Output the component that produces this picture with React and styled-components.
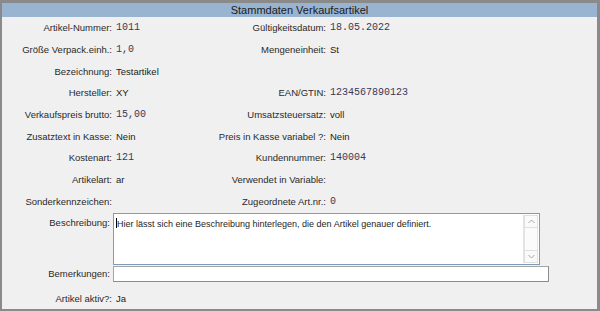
import React from 'react'
import styled, { createGlobalStyle } from 'styled-components'

const GlobalStyle = createGlobalStyle`
  html, body { margin: 0; padding: 0; background: #f0f0f0; }
  body { font-family: "Liberation Sans", Arial, sans-serif; }
`;

const Frame = styled.div`
  width: 600px;
  height: 311px;
  box-sizing: border-box;
  border-style: solid;
  border-color: #8a8a8a;
  border-width: 3px 3px 2px 2px;
  background: #f0f0f0;
  display: flex;
  flex-direction: column;
`;

const Header = styled.div`
  height: 14px;
  background: #99b4d1;
  color: #1a1a1a;
  font-size: 11px;
  line-height: 14px;
  text-align: center;
`;

const FieldGrid = styled.div`
  display: grid;
  grid-template-columns: 110px 90px 116px 1fr;
  grid-auto-rows: 21.7px;
  column-gap: 4px;
  align-items: center;
  font-size: 9.5px;
  color: #2a2a2a;
`;

const Label = styled.div`
  text-align: right;
  white-space: nowrap;
`;

const Value = styled.div`
  white-space: nowrap;
  color: #222;
  ${p => p.$mono && `
    font-family: "Liberation Mono", "Courier New", monospace;
    font-size: 10px;
    color: #3d3754;
  `}
`;

const MemoSection = styled.div`
  display: grid;
  grid-template-columns: 108px 1fr;
  column-gap: 3px;
  margin-top: 1px;
  font-size: 9.5px;
  color: #2a2a2a;
`;

const MemoLabel = styled.div`
  text-align: right;
  white-space: nowrap;
  padding-top: ${p => p.$top || 0}px;
  align-self: ${p => (p.$center ? 'center' : 'start')};
`;

const MemoBox = styled.div`
  width: 427px;
  height: 52px;
  box-sizing: border-box;
  border: 1px solid #7f9db9;
  background: #fff;
  display: flex;
`;

const MemoText = styled.div`
  flex: 1;
  padding: 4px 2px;
  font-size: 9px;
  color: #1e1e1e;
  white-space: nowrap;
  overflow: hidden;
`;

const Caret = styled.span`
  display: inline-block;
  width: 1px;
  height: 10px;
  background: #000;
  vertical-align: -1px;
`;

const ScrollBar = styled.div`
  width: 14px;
  margin: 1px 1px 1px 0;
  display: flex;
  flex-direction: column;
  background: #f4f4f4;
  border-left: 1px solid #e2e2e2;
`;

const ScrollButton = styled.div`
  height: 13px;
  box-sizing: border-box;
  border: 1px solid #e0e0e0;
  background: #fafafa;
  display: flex;
  align-items: center;
  justify-content: center;
`;

const ScrollTrack = styled.div`
  flex: 1;
  border-left: 1px solid #e6e6e6;
  border-right: 1px solid #e6e6e6;
  background: #fbfbfb;
`;

const LineInput = styled.div`
  width: 436px;
  height: 16px;
  box-sizing: border-box;
  margin-top: 1px;
  border: 1px solid #a5a5a5;
  border-right-color: #8c8c8c;
  border-bottom-color: #8c8c8c;
  background: #fff;
`;

const ActiveRow = styled.div`
  display: grid;
  grid-template-columns: 110px 1fr;
  column-gap: 4px;
  height: 20px;
  margin-top: 6px;
  align-items: center;
  font-size: 9.5px;
  color: #2a2a2a;
`;

const Chevron = ({ up }) => (
  <svg width="7" height="5" viewBox="0 0 7 5">
    <path
      d={up ? 'M0.5 4 L3.5 1 L6.5 4' : 'M0.5 1 L3.5 4 L6.5 1'}
      fill="none"
      stroke="#a6a6a6"
      strokeWidth="1"
    />
  </svg>
);

const fields = [
  ['Artikel-Nummer:', '1011', true, 'Gültigkeitsdatum:', '18.05.2022', true],
  ['Größe Verpack.einh.:', '1,0', true, 'Mengeneinheit:', 'St', false],
  ['Bezeichnung:', 'Testartikel', false, '', '', false],
  ['Hersteller:', 'XY', false, 'EAN/GTIN:', '1234567890123', true],
  ['Verkaufspreis brutto:', '15,00', true, 'Umsatzsteuersatz:', 'voll', false],
  ['Zusatztext in Kasse:', 'Nein', false, 'Preis in Kasse variabel ?:', 'Nein', false],
  ['Kostenart:', '121', true, 'Kundennummer:', '140004', true],
  ['Artikelart:', 'ar', false, 'Verwendet in Variable:', '', false],
  ['Sonderkennzeichen:', '', false, 'Zugeordnete Art.nr.:', '0', true],
];

export default function App() {
  return (
    <>
      <GlobalStyle />
      <Frame>
        <Header>Stammdaten Verkaufsartikel</Header>
        <FieldGrid>
          {fields.map(([l1, v1, m1, l2, v2, m2]) => (
            <React.Fragment key={l1}>
              <Label>{l1}</Label>
              <Value $mono={m1}>{v1}</Value>
              <Label>{l2}</Label>
              <Value $mono={m2}>{v2}</Value>
            </React.Fragment>
          ))}
        </FieldGrid>
        <MemoSection>
          <MemoLabel $top={4}>Beschreibung:</MemoLabel>
          <MemoBox>
            <MemoText>
              <Caret />Hier lässt sich eine Beschreibung hinterlegen, die den Artikel genauer definiert.
            </MemoText>
            <ScrollBar>
              <ScrollButton><Chevron up /></ScrollButton>
              <ScrollTrack />
              <ScrollButton><Chevron /></ScrollButton>
            </ScrollBar>
          </MemoBox>
          <MemoLabel $center>Bemerkungen:</MemoLabel>
          <LineInput />
        </MemoSection>
        <ActiveRow>
          <Label>Artikel aktiv?:</Label>
          <Value>Ja</Value>
        </ActiveRow>
      </Frame>
    </>
  );
}
